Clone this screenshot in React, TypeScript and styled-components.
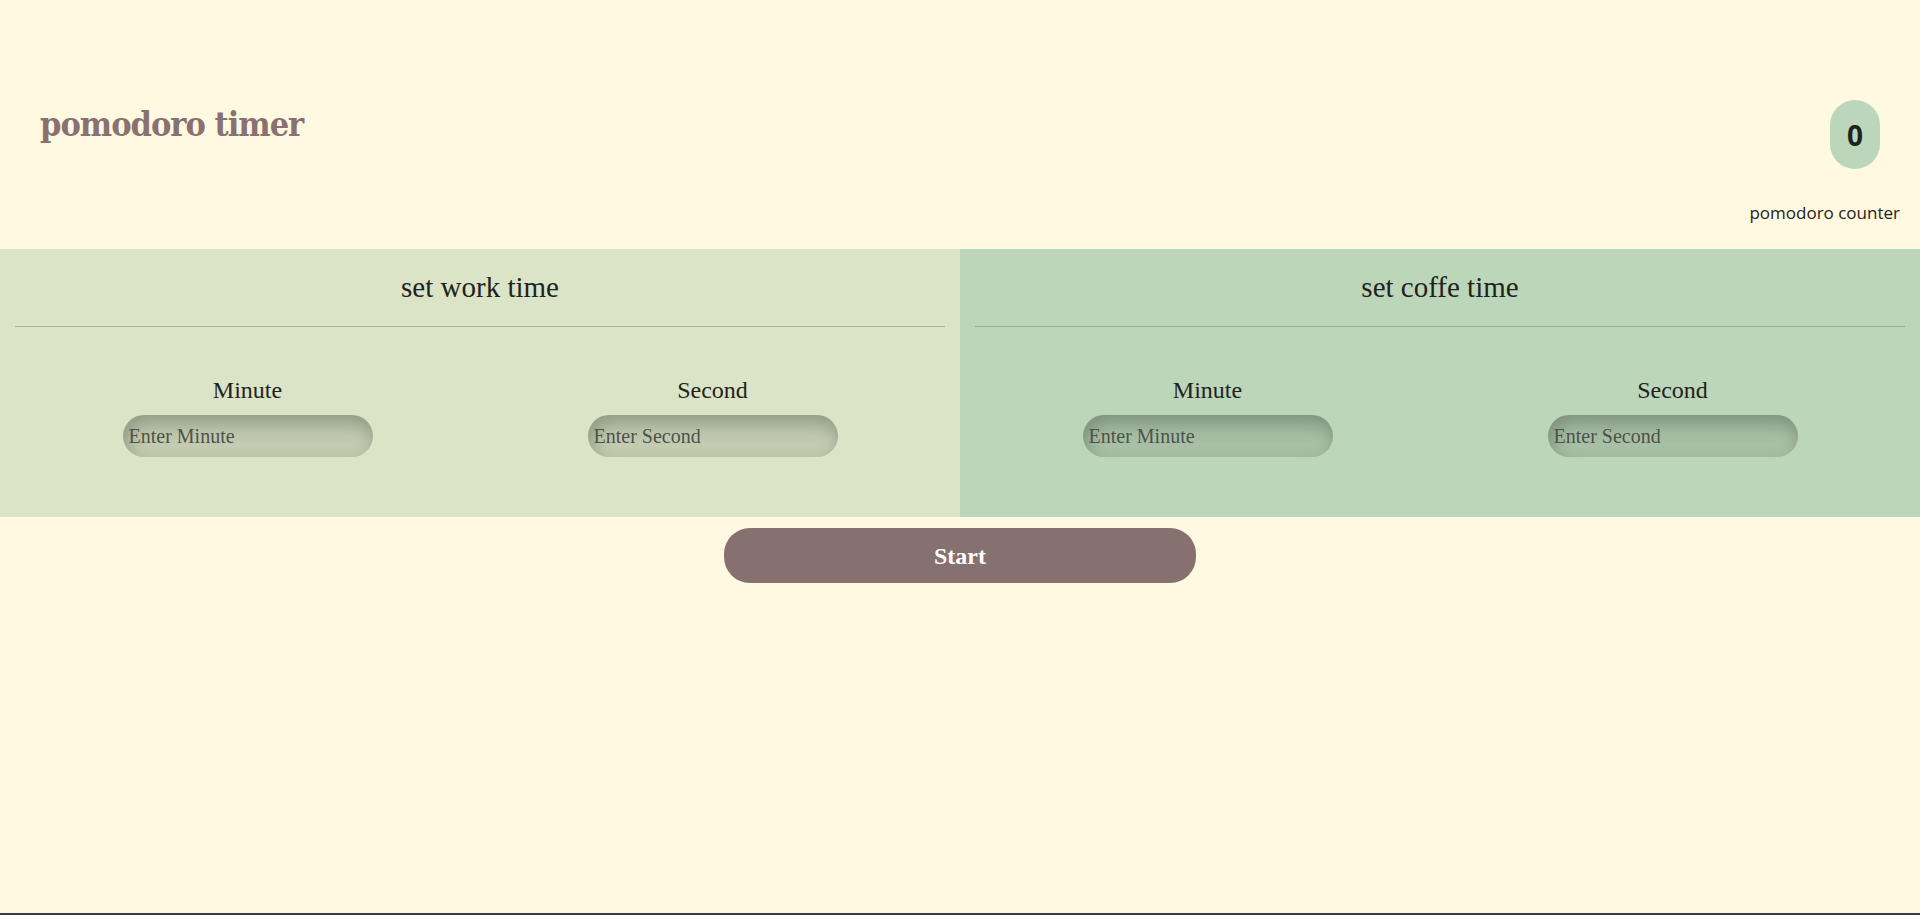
import styled, { createGlobalStyle } from "styled-components";

const GlobalStyle = createGlobalStyle`
  html {
    background: #3b3b4a;
  }
  body {
    margin: 0;
    height: 913px;
    background: #fef9e0;
    font-family: "Liberation Serif", serif;
    color: #1f2320;
  }
  * {
    box-sizing: border-box;
  }
`;

const Header = styled.header`
  height: 249px;
  display: flex;
  justify-content: space-between;
  align-items: flex-start;
  padding: 0 20px 0 40px;
`;

const Title = styled.h1`
  margin: 107px 0 0;
  font-family: "DejaVu Serif Condensed", "DejaVu Serif", serif;
  font-weight: 900;
  font-size: 34px;
  letter-spacing: -1px;
  color: #8a7171;
  line-height: 1;
`;

const CounterBox = styled.div`
  display: flex;
  flex-direction: column;
  align-items: flex-end;
  padding-top: 100px;
`;

const Badge = styled.div`
  width: 50px;
  height: 69px;
  margin-right: 20px;
  border-radius: 25px;
  background: #bcd6bb;
  display: flex;
  align-items: center;
  justify-content: center;
  font-family: "Open Sans", sans-serif;
  font-weight: 700;
  font-size: 28px;
  color: #1f2320;
`;

const CounterLabel = styled.span`
  margin-top: 32px;
  font-family: "Open Sans", sans-serif;
  font-size: 17px;
  color: #1f2320;
`;

const Panels = styled.main`
  display: grid;
  grid-template-columns: 1fr 1fr;
`;

const Panel = styled.section<{ $bg: string }>`
  height: 268px;
  background: ${(p) => p.$bg};
  padding: 0 15px;
`;

const PanelTitle = styled.h2`
  margin: 0;
  height: 78px;
  padding-top: 22px;
  text-align: center;
  font-weight: 400;
  font-size: 29px;
  border-bottom: 1px solid rgba(60, 70, 50, 0.3);
`;

const Fields = styled.div`
  display: grid;
  grid-template-columns: 1fr 1fr;
  padding-top: 48px;
`;

const Field = styled.label`
  display: flex;
  flex-direction: column;
  align-items: center;
  gap: 10px;
`;

const FieldName = styled.span`
  font-size: 24px;
  line-height: 30px;
`;

const TimeInput = styled.input`
  width: 250px;
  height: 42px;
  border: none;
  border-radius: 21px;
  padding: 0 6px;
  outline: none;
  font-family: "Liberation Serif", serif;
  font-size: 20px;
  color: #333;
  background: rgba(40, 50, 40, 0.13);
  box-shadow: inset 3px 9px 18px rgba(30, 40, 30, 0.3);

  &::placeholder {
    color: #4e524a;
  }
`;

const Actions = styled.div`
  display: flex;
  justify-content: center;
  padding-top: 11px;
`;

const StartButton = styled.button`
  width: 472px;
  height: 55px;
  border: none;
  border-radius: 26px;
  background: #877070;
  color: #fff;
  font-family: "Liberation Serif", serif;
  font-weight: 700;
  font-size: 24px;
  padding-top: 2px;
  cursor: pointer;
`;

const TimePanel = ({ title, bg }: { title: string; bg: string }) => (
  <Panel $bg={bg}>
    <PanelTitle>{title}</PanelTitle>
    <Fields>
      <Field>
        <FieldName>Minute</FieldName>
        <TimeInput type="number" placeholder="Enter Minute" />
      </Field>
      <Field>
        <FieldName>Second</FieldName>
        <TimeInput type="number" placeholder="Enter Second" />
      </Field>
    </Fields>
  </Panel>
);

export default function App() {
  return (
    <>
      <GlobalStyle />
      <Header>
        <Title>pomodoro timer</Title>
        <CounterBox>
          <Badge>0</Badge>
          <CounterLabel>pomodoro counter</CounterLabel>
        </CounterBox>
      </Header>
      <Panels>
        <TimePanel title="set work time" bg="#dbe4c6" />
        <TimePanel title="set coffe time" bg="#bcd6b9" />
      </Panels>
      <Actions>
        <StartButton>Start</StartButton>
      </Actions>
    </>
  );
}
